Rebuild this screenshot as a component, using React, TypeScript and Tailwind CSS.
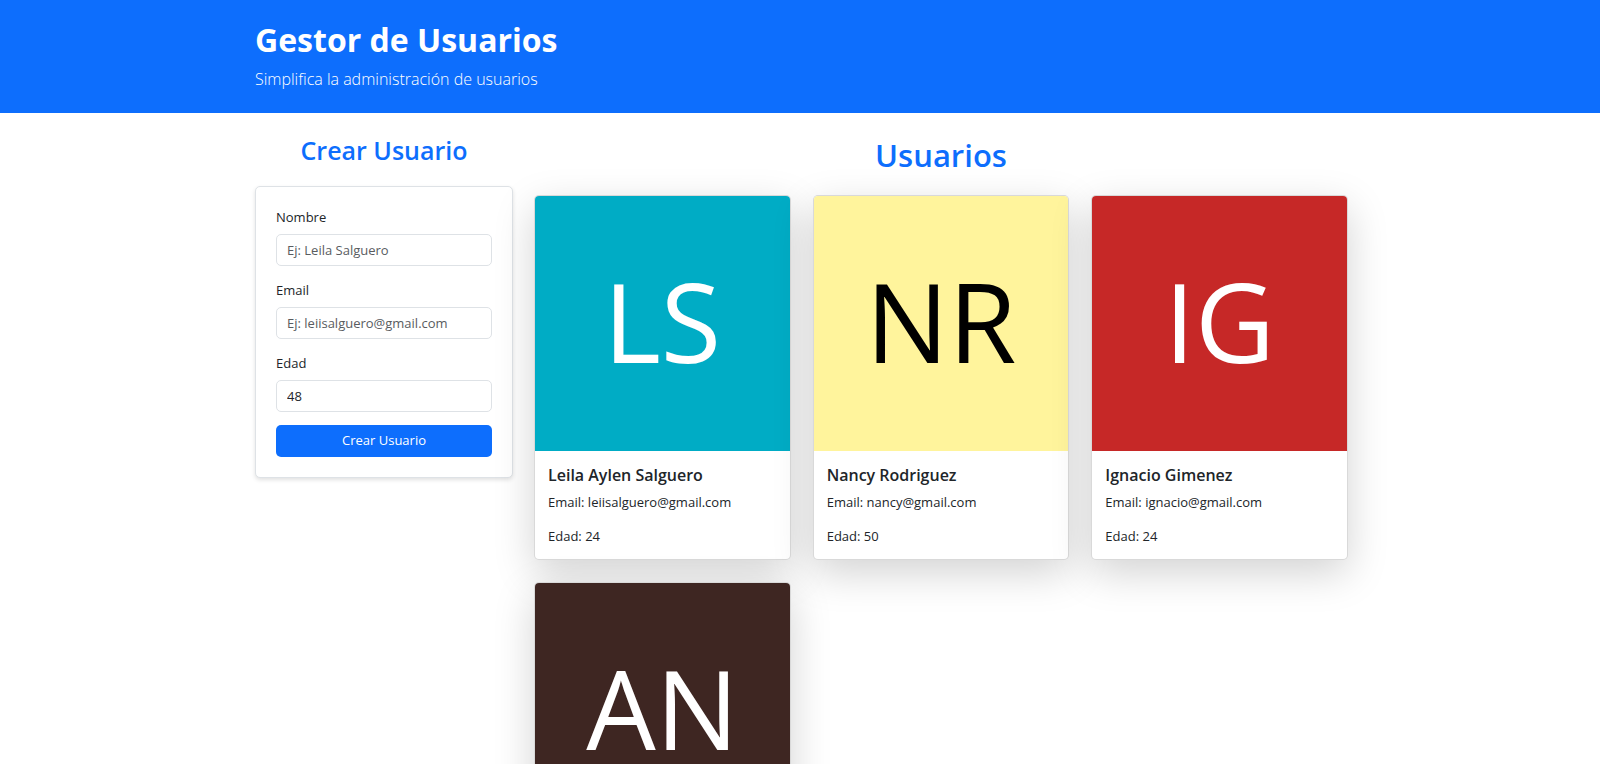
import { useState } from "react";

type User = {
  name: string;
  email: string;
  age: number;
  initials: string;
  tone: string;
};

const users: User[] = [
  { name: "Leila Aylen Salguero", email: "leiisalguero@gmail.com", age: 24, initials: "LS", tone: "bg-[#00acc5] text-white" },
  { name: "Nancy Rodriguez", email: "nancy@gmail.com", age: 50, initials: "NR", tone: "bg-[#fff49c] text-black" },
  { name: "Ignacio Gimenez", email: "ignacio@gmail.com", age: 24, initials: "IG", tone: "bg-[#c62827] text-white" },
  { name: "AN", email: "", age: 0, initials: "AN", tone: "bg-[#3e2622] text-white" },
];

const fieldClass =
  "block h-8 w-full rounded-[5px] border border-[#dee2e6] bg-white px-[10px] text-[13px] text-[#212529] outline-none placeholder:text-[#595c5f] placeholder:opacity-100";

function Field({ id, label, type, placeholder, defaultValue }: {
  id: string;
  label: string;
  type: string;
  placeholder?: string;
  defaultValue?: string;
}) {
  return (
    <div>
      <label htmlFor={id} className="mb-[7px] block leading-5">{label}</label>
      <input id={id} type={type} placeholder={placeholder} defaultValue={defaultValue} className={fieldClass} />
    </div>
  );
}

function UserCard({ user }: { user: User }) {
  return (
    <article className="overflow-hidden rounded-[5px] border border-black/15 bg-white shadow-[0_13px_40px_rgba(0,0,0,0.175)]">
      <div className={`flex aspect-square items-center justify-center pb-[6px] text-[110px] leading-none ${user.tone}`}>
        {user.initials}
      </div>
      {user.email && (
        <div className="p-[13px]">
          <h3 className="mb-[6px] text-base leading-[22px] font-semibold">{user.name}</h3>
          <p className="mb-[14px] leading-5">Email: {user.email}</p>
          <p className="leading-5">Edad: {user.age}</p>
        </div>
      )}
    </article>
  );
}

export default function App() {
  const [list] = useState(users);
  return (
    <div className="h-screen overflow-x-hidden overflow-y-auto bg-white font-['Open_Sans','Noto_Sans',sans-serif] text-[13px] text-[#212529] [scrollbar-width:none]">
      <header className="bg-[#0d6efd] pt-5 pb-[23px] text-white">
        <div className="mx-auto max-w-[1096px] pl-[3px]">
          <h1 className="mb-2 text-[32px] leading-10 font-bold">Gestor de Usuarios</h1>
          <p className="text-base leading-[22px] font-light">Simplifica la administración de usuarios</p>
        </div>
      </header>

      <div className="mx-auto grid max-w-[1096px] grid-cols-[258px_minmax(0,1fr)] items-start gap-[21px] pl-[3px]">
        <aside className="pt-[21px]">
          <h2 className="mb-5 text-center text-[25px] leading-8 font-semibold text-[#0d6efd]">Crear Usuario</h2>
          <form
            onSubmit={(event) => event.preventDefault()}
            className="rounded-[5px] border border-[#dee2e6] bg-white p-5 shadow-[0_2px_4px_rgba(0,0,0,0.12)]"
          >
            <div className="flex flex-col gap-[14px]">
              <Field id="nombre" label="Nombre" type="text" placeholder="Ej: Leila Salguero" />
              <Field id="email" label="Email" type="email" placeholder="Ej: leiisalguero@gmail.com" />
              <Field id="edad" label="Edad" type="number" defaultValue="48" />
            </div>
            <button type="submit" className="mt-[13px] block h-8 w-full rounded-[5px] bg-[#0d6efd] text-white">
              Crear Usuario
            </button>
          </form>
        </aside>

        <main className="pt-[22px]">
          <h2 className="mb-5 text-center text-[31px] leading-10 font-semibold text-[#0d6efd]">Usuarios</h2>
          <div className="grid grid-cols-3 gap-[22px] pb-12">
            {list.map((user) => (
              <UserCard key={user.initials} user={user} />
            ))}
          </div>
        </main>
      </div>
    </div>
  );
}
